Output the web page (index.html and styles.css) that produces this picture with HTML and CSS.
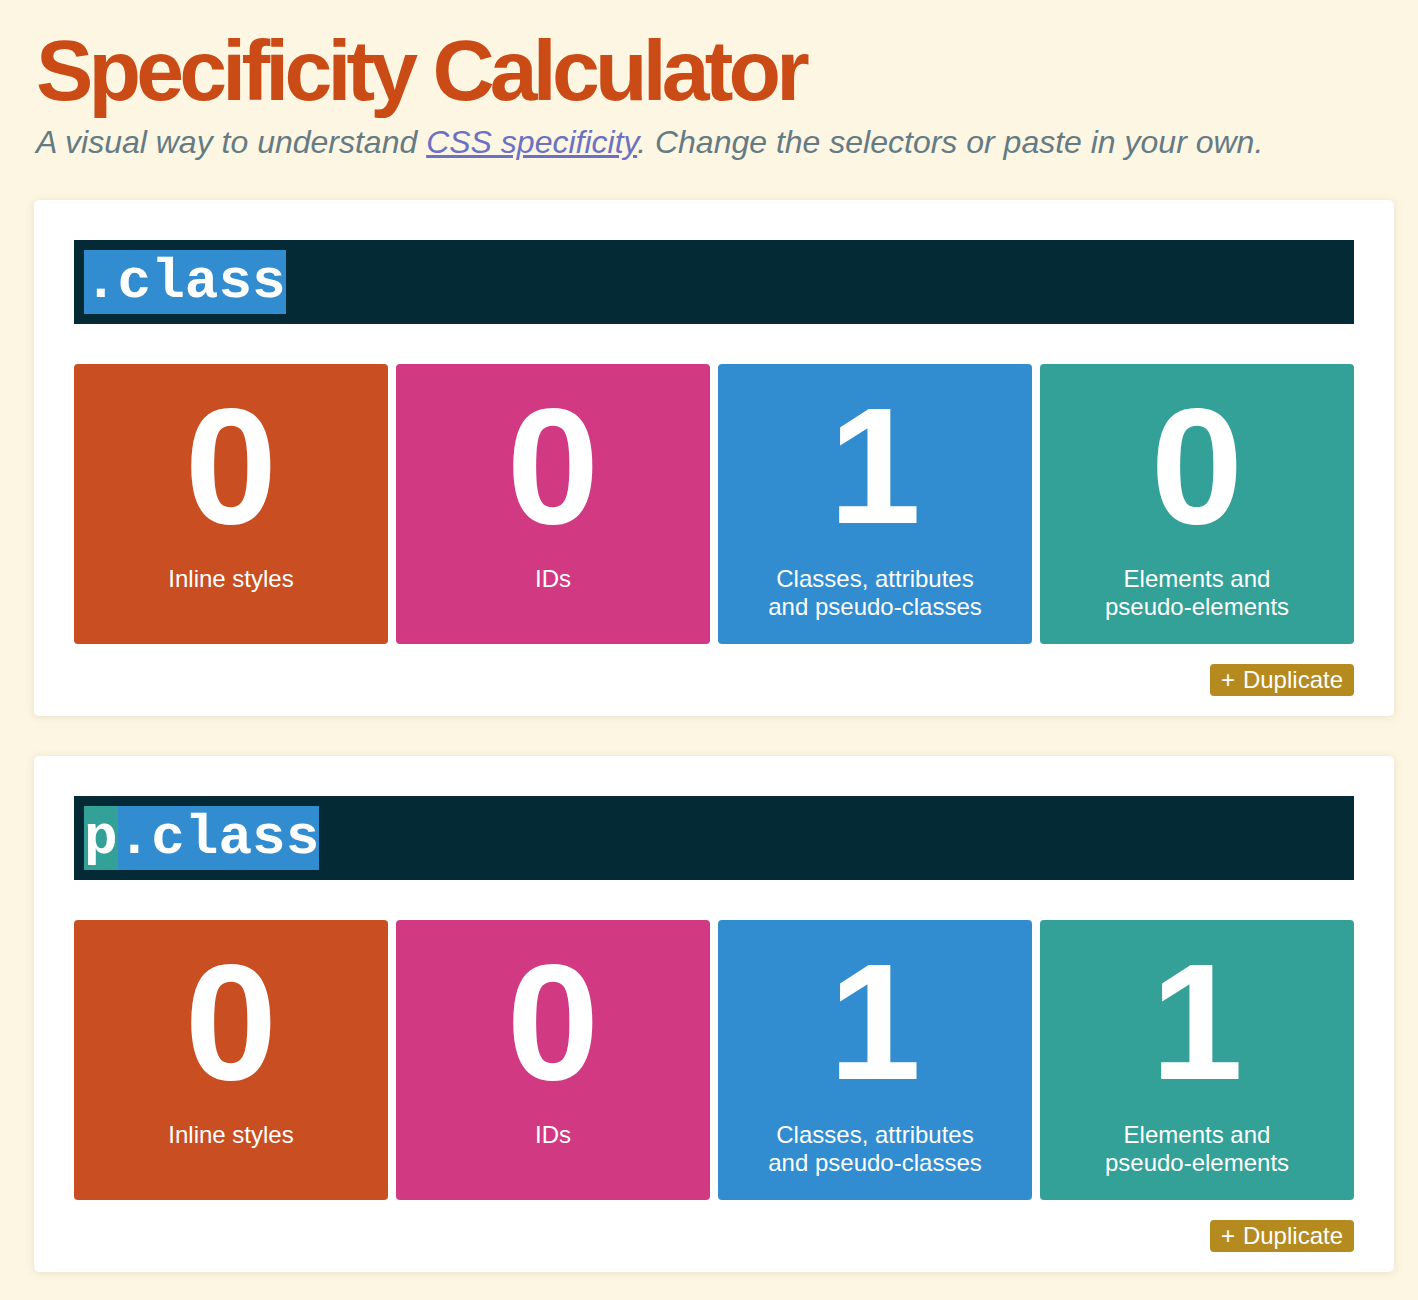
FILE: index.html
```html
<!DOCTYPE html>
<html lang="en">
<head>
    <meta charset="UTF-8">
    <meta name="viewport" content="width=device-width, initial-scale=1.0">
    <title>Specificity Calculator</title>
    <link rel="stylesheet" href="styles.css">
</head>
<body>
    <h1>Specificity Calculator</h1>
    <p class="intro">A visual way to understand <a href="#">CSS specificity</a>. Change the selectors or paste in your own.</p>

    <div class="card">
        <div class="selector"><span class="part part-class">.class</span></div>
        <div class="tiles">
            <div class="tile tile-inline">
                <div class="count">0</div>
                <div class="label">Inline styles</div>
            </div>
            <div class="tile tile-id">
                <div class="count">0</div>
                <div class="label">IDs</div>
            </div>
            <div class="tile tile-class">
                <div class="count">1</div>
                <div class="label">Classes, attributes<br>and pseudo-classes</div>
            </div>
            <div class="tile tile-element">
                <div class="count">0</div>
                <div class="label">Elements and<br>pseudo-elements</div>
            </div>
        </div>
        <div class="actions">
            <button class="duplicate"><span class="plus">+</span>Duplicate</button>
        </div>
    </div>

    <div class="card">
        <div class="selector"><span class="part part-element">p</span><span class="part part-class">.class</span></div>
        <div class="tiles">
            <div class="tile tile-inline">
                <div class="count">0</div>
                <div class="label">Inline styles</div>
            </div>
            <div class="tile tile-id">
                <div class="count">0</div>
                <div class="label">IDs</div>
            </div>
            <div class="tile tile-class">
                <div class="count">1</div>
                <div class="label">Classes, attributes<br>and pseudo-classes</div>
            </div>
            <div class="tile tile-element">
                <div class="count">1</div>
                <div class="label">Elements and<br>pseudo-elements</div>
            </div>
        </div>
        <div class="actions">
            <button class="duplicate"><span class="plus">+</span>Duplicate</button>
        </div>
    </div>
</body>
</html>
```

FILE: styles.css
```css
body {
    font-family: 'Liberation Sans', Arial, sans-serif;
    margin: 0;
    padding: 27px 24px 40px 34px;
    background-color: #fdf6e3;
    color: #657b83;
}
h1 {
    margin: 0;
    font-size: 86px;
    line-height: 1;
    letter-spacing: -4.8px;
    font-variant-ligatures: none;
    color: #cb4b16;
    padding-left: 2px;
}
.intro {
    margin: 13px 0 42px;
    font-size: 32px;
    line-height: 1;
    font-style: italic;
    color: #657b83;
    padding-left: 2px;
}
.intro a {
    color: #6c71c4;
}
.card {
    background-color: #ffffff;
    border-radius: 5px;
    padding: 40px 40px 20px;
    margin-bottom: 40px;
    box-shadow: 0 1px 8px rgba(120, 100, 40, 0.15);
}
.selector {
    background-color: #042a35;
    padding: 10px;
    height: 64px;
    display: flex;
}
.part {
    font-family: 'Liberation Mono', 'Courier New', monospace;
    font-weight: bold;
    font-size: 56px;
    line-height: 64px;
    color: #ffffff;
}
.part-class {
    background-color: #318cd0;
}
.part-element {
    background-color: #33a197;
}
.tiles {
    display: grid;
    grid-template-columns: repeat(4, 1fr);
    gap: 8px;
    margin-top: 40px;
}
.tile {
    height: 280px;
    border-radius: 4px;
    color: #ffffff;
    text-align: center;
    padding-top: 19px;
    box-sizing: border-box;
}
.tile-inline {
    background-color: #c94f22;
}
.tile-id {
    background-color: #d13a82;
}
.tile-class {
    background-color: #318cd0;
}
.tile-element {
    background-color: #33a197;
}
.count {
    font-size: 166px;
    line-height: 166px;
    font-weight: bold;
}
.label {
    margin-top: 16px;
    font-size: 24px;
    line-height: 28px;
}
.actions {
    display: flex;
    justify-content: flex-end;
    margin-top: 20px;
}
.duplicate {
    background-color: #b58a1f;
    color: #ffffff;
    border: none;
    border-radius: 4px;
    font-family: 'Liberation Sans', Arial, sans-serif;
    font-size: 24px;
    height: 32px;
    padding: 0 11px;
    line-height: 32px;
    cursor: pointer;
}
.plus {
    margin-right: 8px;
}
```
